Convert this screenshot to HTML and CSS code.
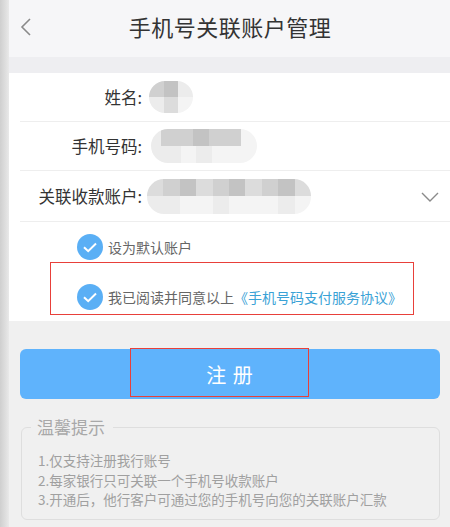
FILE: index.html
```html
<!DOCTYPE html>
<html lang="zh-CN">
<head>
<meta charset="utf-8">
<link rel="stylesheet" href="styles.css">
</head>
<body>
<div class="page">
  <div class="edge"></div>
  <div class="main">
    <header class="topbar">
      <svg class="back" width="14" height="20" viewBox="0 0 14 20"><path d="M11 2 L3 10 L11 18" fill="none" stroke="#8a8a8a" stroke-width="1.6"/></svg>
      <h1 class="title">手机号关联账户管理</h1>
    </header>
    <div class="gap"></div>
    <section class="form">
      <div class="row">
        <div class="label">姓名:</div>
        <div class="mosaic m-name">
          <div class="mrow"><span class="c c2"></span><span class="c c1"></span><span class="c c4"></span></div>
          <div class="mrow"><span class="c c4"></span><span class="c c3"></span><span class="c c5"></span></div>
        </div>
      </div>
      <div class="row">
        <div class="label">手机号码:</div>
        <div class="mosaic m-phone">
          <div class="mrow"><span class="c c4"></span><span class="c c2"></span><span class="c c2"></span><span class="c c1"></span><span class="c c2"></span><span class="c c2"></span><span class="c c5"></span></div>
          <div class="mrow"><span class="c c4"></span><span class="c c4"></span><span class="c c5"></span><span class="c c4"></span><span class="c c5"></span><span class="c c5"></span><span class="c c5"></span></div>
        </div>
      </div>
      <div class="row">
        <div class="label">关联收款账户:</div>
        <div class="mosaic m-acct">
          <div class="mrow"><span class="c c3"></span><span class="c c2"></span><span class="c c1"></span><span class="c c3"></span><span class="c c2"></span><span class="c c1"></span><span class="c c3"></span><span class="c c2"></span><span class="c c1"></span><span class="c c3"></span></div>
          <div class="mrow"><span class="c c4"></span><span class="c c4"></span><span class="c c5"></span><span class="c c5"></span><span class="c c4"></span><span class="c c5"></span><span class="c c5"></span><span class="c c5"></span><span class="c c4"></span><span class="c c5"></span></div>
        </div>
        <svg class="chev" width="18" height="10" viewBox="0 0 18 10"><path d="M1 1 L9 9 L17 1" fill="none" stroke="#8a8a8a" stroke-width="1.4"/></svg>
      </div>
      <div class="checks">
        <div class="check">
          <svg class="tick" width="26" height="26" viewBox="0 0 26 26"><circle cx="13" cy="13" r="13" fill="#5aaff5"/><path d="M7 13.2 L11.2 17.2 L19 9.5" fill="none" stroke="#fff" stroke-width="2"/></svg>
          <span>设为默认账户</span>
        </div>
        <div class="check agree">
          <svg class="tick" width="26" height="26" viewBox="0 0 26 26"><circle cx="13" cy="13" r="13" fill="#5aaff5"/><path d="M7 13.2 L11.2 17.2 L19 9.5" fill="none" stroke="#fff" stroke-width="2"/></svg>
          <span>我已阅读并同意以上<a class="link">《手机号码支付服务协议》</a></span>
          <div class="mark mark-agree"></div>
        </div>
      </div>
    </section>
    <div class="btnwrap">
      <button class="btn">注 册</button>
      <div class="mark mark-btn"></div>
    </div>
    <fieldset class="tips">
      <legend>温馨提示</legend>
      <p>1.仅支持注册我行账号</p>
      <p>2.每家银行只可关联一个手机号收款账户</p>
      <p>3.开通后，他行客户可通过您的手机号向您的关联账户汇款</p>
    </fieldset>
  </div>
</div>
</body>
</html>
```
FILE: styles.css
```css
* { box-sizing: border-box; }
html, body { margin: 0; padding: 0; }
body {
  width: 450px;
  height: 527px;
  overflow: hidden;
  background: #f0f0f0;
  font-family: "Noto Sans CJK SC", "Noto Sans", sans-serif;
  color: #333;
}
.page { display: flex; height: 527px; }
.edge {
  width: 9px;
  flex: none;
  background: linear-gradient(to right, #cfcfcf, #dedede 60%, #e9e9e9);
}
.main { flex: 1; display: flex; flex-direction: column; position: relative; }
.topbar {
  height: 57px;
  background: #f6f6f8;
  display: flex;
  align-items: center;
  justify-content: center;
  position: relative;
  padding-bottom: 5px;
}
.back { position: absolute; left: 10px; top: 17px; }
.title {
  margin: 0;
  padding-left: 1px;
  font-size: 22px;
  line-height: 30px;
  font-weight: 400;
  color: #333;
  letter-spacing: 0.5px;
}
.gap { height: 16px; background: #eeeef1; }
.form { background: #fff; padding-bottom: 1px; }
.row {
  height: 49px;
  display: flex;
  align-items: center;
  margin-left: 11px;
  border-bottom: 1px solid #eeeeee;
  position: relative;
}
.row:nth-child(3) { height: 51px; }
.label {
  width: 122px;
  text-align: right;
  font-size: 16.5px;
  color: #333;
  flex: none;
}
.mosaic {
  display: flex;
  flex-direction: column;
  overflow: hidden;
  border-radius: 17px;
  margin-left: 6px;
  filter: blur(0.6px);
}
.mrow { display: flex; }
.c { display: block; height: 17px; width: 17px; }
.c1 { background: #c3c3c3; }
.c2 { background: #d0d0d0; }
.c3 { background: #dcdcdc; }
.c4 { background: #ececec; }
.c5 { background: #f4f4f4; }
.m-name { width: 44px; margin-left: 7px; }
.m-name .c { width: 15px; height: 16px; }
.m-phone { width: 106px; margin-left: 9px; }
.m-phone .c { width: 16px; }
.m-phone .mrow:first-child .c:first-child { width: 10px; }
.m-acct { width: 164px; margin-left: 5px; }
.m-acct .c { width: 16.5px; height: 17.5px; }
.chev { position: absolute; right: 11px; top: 21px; }
.checks { padding: 12px 0 0 0; }
.check {
  display: flex;
  align-items: center;
  height: 26px;
  padding-left: 68px;
  font-size: 14px;
  color: #666;
  position: relative;
}
.check .tick { margin-right: 5px; flex: none; }
.agree { margin-top: 24px; margin-bottom: 10px; }
.link { color: #3aa2d6; }
.mark {
  position: absolute;
  border: 1.5px solid #e8403a;
  pointer-events: none;
}
.mark-agree { left: 41px; top: -22px; width: 364px; height: 53px; }
.btnwrap { position: relative; margin: 28px 10px 0 11px; }
.btn {
  display: block;
  width: 100%;
  height: 50px;
  border: none;
  border-radius: 6px;
  background: #5fb3fc;
  color: #fff;
  font-family: inherit;
  font-size: 20px;
  letter-spacing: 1px;
  padding: 0;
}
.mark-btn { left: 110px; top: -1px; width: 179px; height: 49px; }
.tips {
  margin: 18px 10px 0 12px;
  border: 1px solid #dedede;
  border-radius: 6px;
  padding: 14px 0 14px 16px;
  height: 103px;
}
.tips legend {
  font-size: 17px;
  color: #a8a8a8;
  padding: 0 8px 0 6px;
  margin-left: -7px;
  line-height: 20px;
}
.tips p {
  margin: 0;
  font-size: 13.5px;
  line-height: 19.7px;
  color: #a0a0a0;
}
```
